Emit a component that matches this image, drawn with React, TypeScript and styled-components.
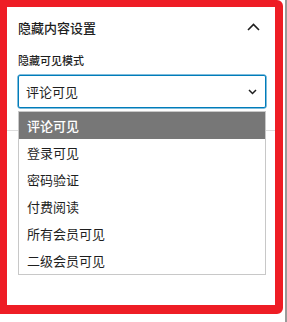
import React from "react";
import styled, { createGlobalStyle } from "styled-components";

const GlobalStyle = createGlobalStyle`
  html, body {
    margin: 0;
    padding: 0;
    background: #fff;
  }
  body {
    font-family: "Noto Sans CJK SC", "Liberation Sans", sans-serif;
    color: #1e1e1e;
  }
`;

const Page = styled.div`
  display: flex;
  width: 287px;
  height: 322px;
  gap: 2px;
`;

const Frame = styled.div`
  position: relative;
  box-sizing: border-box;
  width: 283px;
  height: 314px;
  border-style: solid;
  border-color: #ee1d25;
  border-width: 7px 8px 9px 7px;
  border-radius: 0 6px 6px 0;
  background: #fff;
`;

const SideEdge = styled.div`
  width: 2px;
  height: 322px;
  background: #9a9a9a;
`;

const PanelBody = styled.div`
  border-bottom: 1px solid #dddddd;
  padding: 3px 9px 22px 11px;
`;

const PanelHeader = styled.div`
  display: flex;
  align-items: center;
  justify-content: space-between;
  height: 34px;
  font-size: 13px;
  font-weight: 500;
  padding-right: 6px;
`;

const Label = styled.div`
  margin-top: 8px;
  font-size: 11px;
  font-weight: 500;
  line-height: 16px;
`;

const SelectBox = styled.div`
  box-sizing: border-box;
  margin-top: 7px;
  height: 33px;
  display: flex;
  align-items: center;
  justify-content: space-between;
  padding: 0 8px 0 7px;
  border: 1px solid #007cba;
  box-shadow: 0 0 0 0.5px #007cba;
  border-radius: 2px;
  font-size: 13px;
`;

const OptionList = styled.ul`
  position: absolute;
  left: 11px;
  top: 104px;
  width: 248px;
  box-sizing: border-box;
  margin: 0;
  padding: 0;
  list-style: none;
  border: 1px solid #c8c8c8;
  background: #fff;
`;

const Option = styled.li<{ $active?: boolean }>`
  height: 27px;
  display: flex;
  align-items: center;
  padding-left: 8px;
  font-size: 13px;
  background: ${(p) => (p.$active ? "#777777" : "#fff")};
  color: ${(p) => (p.$active ? "#fff" : "#1e1e1e")};
  font-weight: ${(p) => (p.$active ? 500 : 400)};
`;

const Chevron = ({ up }: { up?: boolean }) => (
  <svg width={up ? 13 : 9} height={up ? 8 : 6} viewBox={up ? "0 0 13 8" : "0 0 9 6"}>
    {up ? (
      <path d="M1 7 L6.5 1.5 L12 7" fill="none" stroke="#1e1e1e" strokeWidth="1.6" />
    ) : (
      <path d="M1 1 L4.5 4.5 L8 1" fill="none" stroke="#1e1e1e" strokeWidth="1.5" />
    )}
  </svg>
);

const options = ["评论可见", "登录可见", "密码验证", "付费阅读", "所有会员可见", "二级会员可见"];

export default function App() {
  return (
    <>
      <GlobalStyle />
      <Page>
        <Frame>
          <PanelBody>
            <PanelHeader>
              <span>隐藏内容设置</span>
              <Chevron up />
            </PanelHeader>
            <Label>隐藏可见模式</Label>
            <SelectBox>
              <span>评论可见</span>
              <Chevron />
            </SelectBox>
          </PanelBody>
          <OptionList>
            {options.map((o, i) => (
              <Option key={o} $active={i === 0}>
                {o}
              </Option>
            ))}
          </OptionList>
        </Frame>
        <SideEdge />
      </Page>
    </>
  );
}
